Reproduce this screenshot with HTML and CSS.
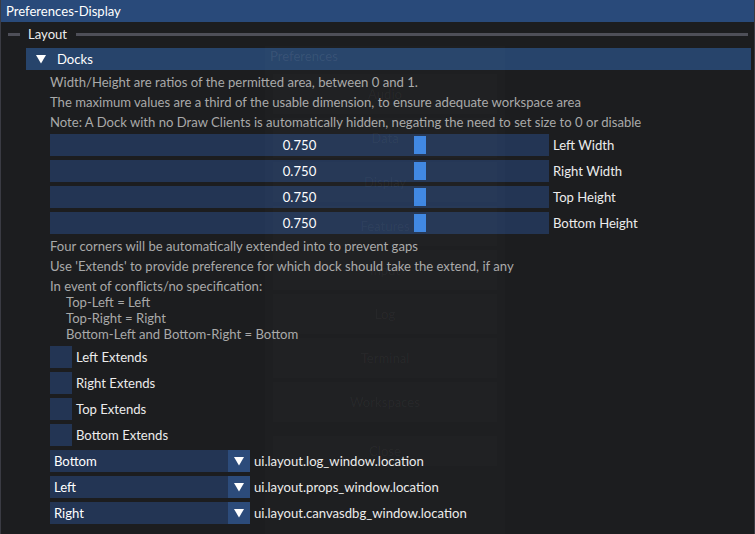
FILE: index.html
```html
<!DOCTYPE html>
<html>
<head>
<meta charset="utf-8">
<link rel="stylesheet" href="styles.css">
</head>
<body>
<div class="window">
  <div class="titlebar">Preferences-Display</div>
  <div class="content">
    <div class="sep"><span class="sep-line sep-short"></span><span class="sep-text">Layout</span><span class="sep-line sep-grow"></span></div>
    <div class="header">
      <svg class="tri" width="10" height="9" viewBox="0 0 10 9"><polygon points="0,0 10,0 5,8.5" fill="#ffffff"/></svg>
      <span>Docks</span>
    </div>
    <div class="section">
      <div class="txt">Width/Height are ratios of the permitted area, between 0 and 1.</div>
      <div class="txt">The maximum values are a third of the usable dimension, to ensure adequate workspace area</div>
      <div class="txt">Note: A Dock with no Draw Clients is automatically hidden, negating the need to set size to 0 or disable</div>
      <div class="row"><div class="slider"><span class="val">0.750</span><span class="grab"></span></div><span class="lbl">Left Width</span></div>
      <div class="row"><div class="slider"><span class="val">0.750</span><span class="grab"></span></div><span class="lbl">Right Width</span></div>
      <div class="row"><div class="slider"><span class="val">0.750</span><span class="grab"></span></div><span class="lbl">Top Height</span></div>
      <div class="row"><div class="slider"><span class="val">0.750</span><span class="grab"></span></div><span class="lbl">Bottom Height</span></div>
      <div class="txt">Four corners will be automatically extended into to prevent gaps</div>
      <div class="txt">Use 'Extends' to provide preference for which dock should take the extend, if any</div>
      <div class="txt multi">In event of conflicts/no specification:<br><span class="ind">Top-Left = Left</span><br><span class="ind">Top-Right = Right</span><br><span class="ind">Bottom-Left and Bottom-Right = Bottom</span></div>
      <div class="row"><span class="check"></span><span class="lbl">Left Extends</span></div>
      <div class="row"><span class="check"></span><span class="lbl">Right Extends</span></div>
      <div class="row"><span class="check"></span><span class="lbl">Top Extends</span></div>
      <div class="row"><span class="check"></span><span class="lbl">Bottom Extends</span></div>
      <div class="row"><div class="combo"><span class="combo-val">Bottom</span><span class="combo-btn"><svg width="10" height="9" viewBox="0 0 10 9"><polygon points="0,0 10,0 5,8.5" fill="#ffffff"/></svg></span></div><span class="lbl">ui.layout.log_window.location</span></div>
      <div class="row"><div class="combo"><span class="combo-val">Left</span><span class="combo-btn"><svg width="10" height="9" viewBox="0 0 10 9"><polygon points="0,0 10,0 5,8.5" fill="#ffffff"/></svg></span></div><span class="lbl">ui.layout.props_window.location</span></div>
      <div class="row"><div class="combo"><span class="combo-val">Right</span><span class="combo-btn"><svg width="10" height="9" viewBox="0 0 10 9"><polygon points="0,0 10,0 5,8.5" fill="#ffffff"/></svg></span></div><span class="lbl">ui.layout.canvasdbg_window.location</span></div>
    </div>
  </div>
  <div class="ghost">
    <div class="ghost-title">Preferences</div>
    <div class="ghost-list">
      <div class="ghost-btn">Audio</div>
      <div class="ghost-btn">Data</div>
      <div class="ghost-btn">Display</div>
      <div class="ghost-btn">Features</div>
      <div class="ghost-btn">Input</div>
      <div class="ghost-btn">Log</div>
      <div class="ghost-btn">Terminal</div>
      <div class="ghost-btn">Workspaces</div>
      <div class="ghost-btn ghost-close">Close</div>
    </div>
  </div>
</div>
</body>
</html>
```
FILE: styles.css
```css
html, body {
  margin: 0;
  padding: 0;
  background: #1c1d1f;
}
body {
  width: 755px;
  height: 534px;
  overflow: hidden;
  font-family: "Lato", "Noto Sans", sans-serif;
  font-size: 13.1px;
  color: #e8e8e8;
}
.window {
  position: relative;
  width: 755px;
  height: 534px;
  box-sizing: border-box;
  border-left: 1px solid #3a3b43;
  border-right: 1px solid #3a3b43;
  background: #1c1d1f;
  overflow: hidden;
}
.titlebar {
  height: 22px;
  line-height: 22px;
  background: #294a7a;
  padding-left: 5px;
  color: #ffffff;
}
.content {
  padding: 4px 3px 0 7px;
  display: flex;
  flex-direction: column;
}
.sep {
  display: flex;
  align-items: center;
  height: 16px;
  margin-right: 3px;
}
.sep-line {
  height: 3px;
  background: #4e4f58;
}
.sep-short {
  width: 12px;
}
.sep-grow {
  flex: 1;
}
.sep-text {
  margin: 0 9px 0 8px;
  color: #ececec;
}
.header {
  margin-top: 6px;
  margin-left: 18px;
  height: 22px;
  background: #27446b;
  display: flex;
  align-items: center;
  color: #ffffff;
}
.tri {
  margin-left: 10px;
  margin-right: 11px;
}
.section {
  margin-left: 42px;
  margin-top: 4px;
  display: flex;
  flex-direction: column;
  gap: 4px;
}
.txt {
  height: 16px;
  line-height: 16px;
  color: #a9a9a9;
  white-space: nowrap;
}
.txt.multi {
  height: 64px;
}
.ind {
  padding-left: 16px;
}
.row {
  display: flex;
  align-items: center;
  height: 22px;
  gap: 4px;
}
.lbl {
  color: #ececec;
  white-space: nowrap;
}
.slider {
  position: relative;
  width: 499px;
  height: 22px;
  background: #233554;
  display: flex;
  align-items: center;
  justify-content: center;
}
.val {
  color: #ffffff;
}
.grab {
  position: absolute;
  left: 364px;
  top: 2px;
  width: 12px;
  height: 18px;
  background: #3d86e2;
}
.check {
  width: 22px;
  height: 22px;
  background: #233554;
}
.combo {
  width: 200px;
  height: 22px;
  background: #233554;
  display: flex;
  align-items: center;
}
.combo-val {
  flex: 1;
  padding-left: 4px;
  color: #ffffff;
}
.combo-btn {
  width: 22px;
  height: 22px;
  background: #2c4b7a;
  display: flex;
  align-items: center;
  justify-content: center;
}
.ghost {
  position: absolute;
  left: 264px;
  top: 46px;
  width: 240px;
  height: 500px;
  background: rgba(255, 255, 255, 0.012);
  pointer-events: none;
}
.ghost-title {
  height: 20px;
  line-height: 20px;
  padding-left: 5px;
  color: rgba(255, 255, 255, 0.08);
}
.ghost-list {
  display: flex;
  flex-direction: column;
  gap: 4px;
  padding: 8px 8px 0 8px;
}
.ghost-btn {
  height: 40px;
  line-height: 40px;
  text-align: center;
  background: rgba(255, 255, 255, 0.012);
  color: rgba(255, 255, 255, 0.045);
}
.ghost-close {
  margin-top: 10px;
  height: 30px;
  line-height: 30px;
}
```
